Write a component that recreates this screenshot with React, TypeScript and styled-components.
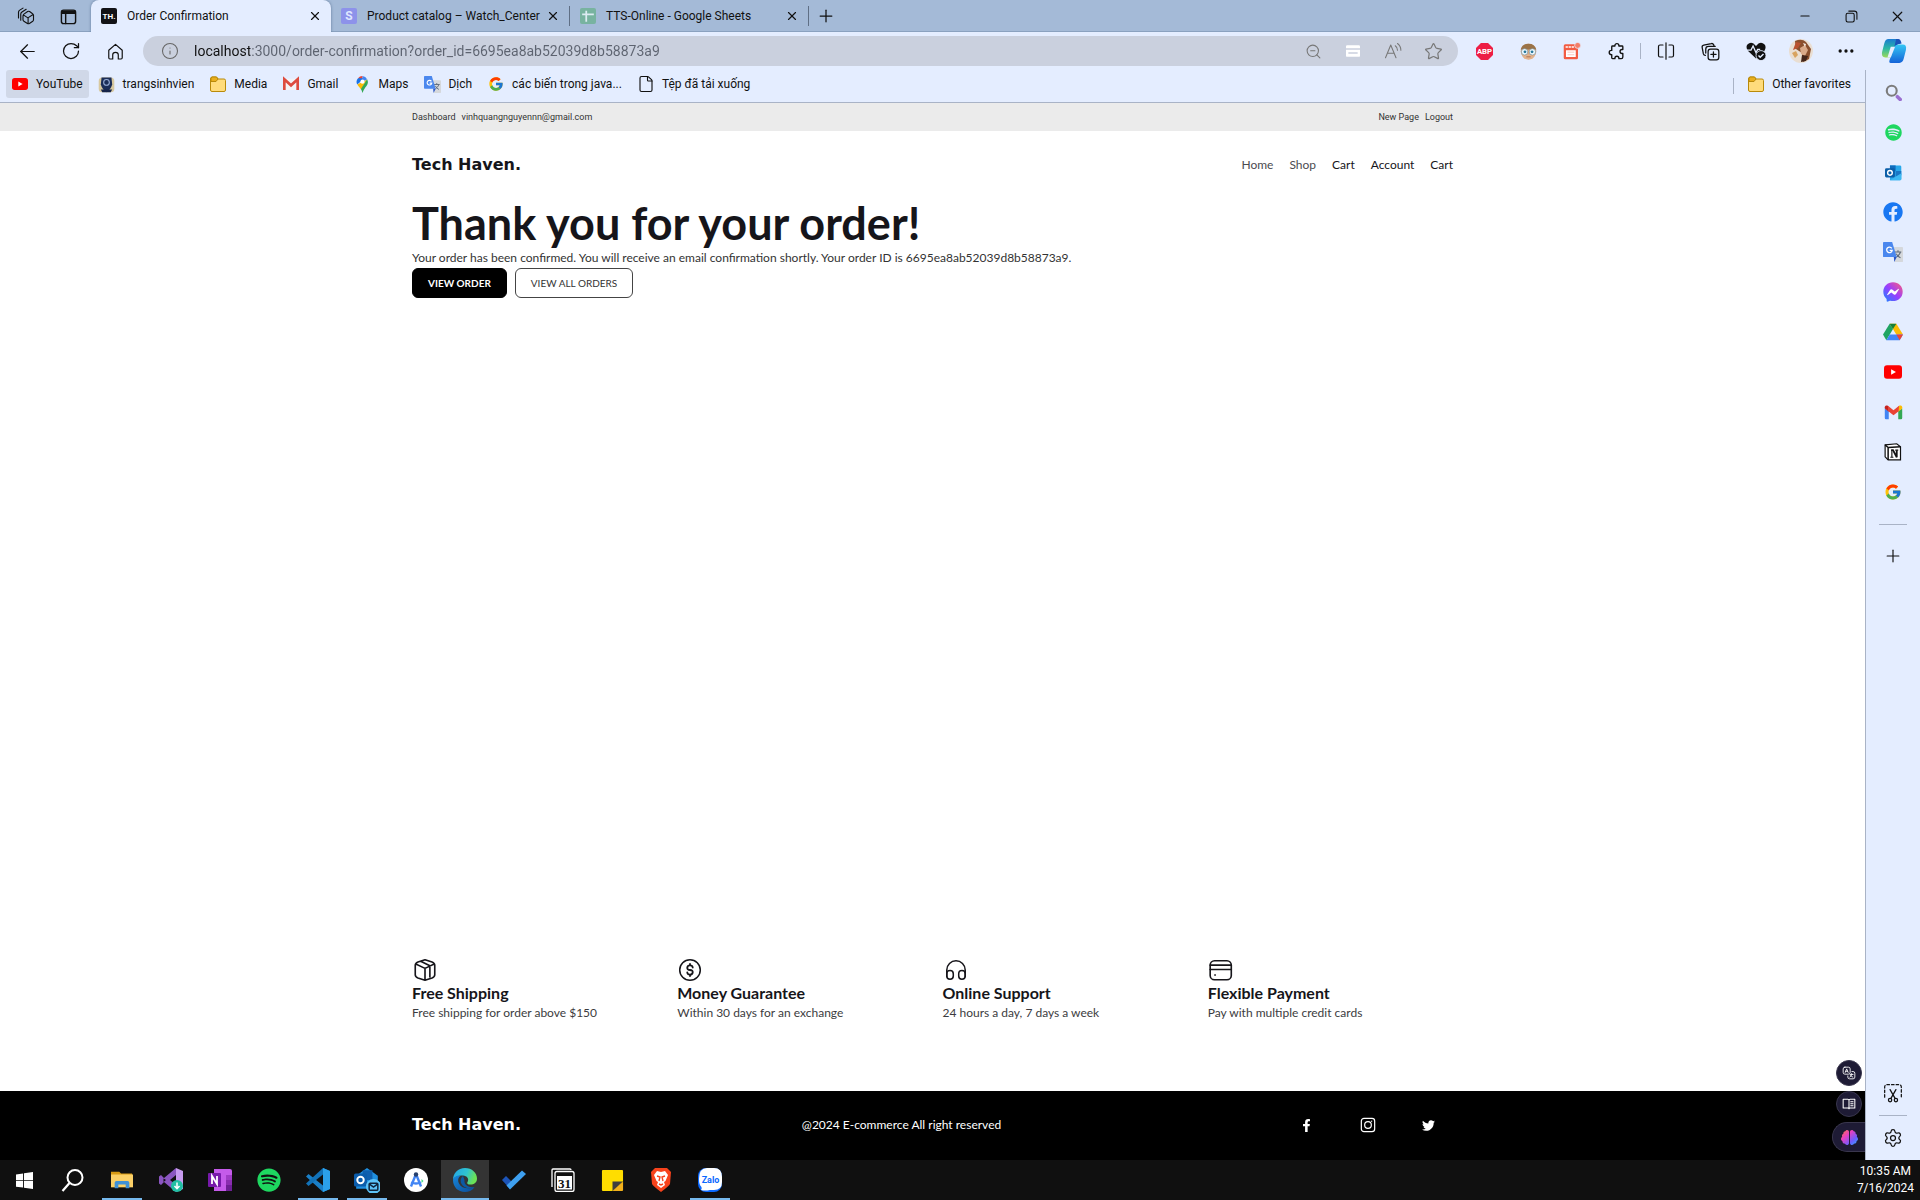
import React from 'react';
import styled, { createGlobalStyle, css } from 'styled-components';
import {
  ArrowLeft, RotateCw, Info, ZoomOut, Star, X, Minus, Plus, Ellipsis, Settings, File,
} from 'lucide-react';
import { FcGoogle } from 'react-icons/fc';
import { FaFacebook, FaFacebookF, FaFacebookMessenger, FaSpotify, FaTwitter, FaBrain } from 'react-icons/fa';

const ui = `Roboto, "Noto Sans", sans-serif`;
const brand = `Lato, "Open Sans", sans-serif`;

const GlobalStyle = createGlobalStyle`
  *, *::before, *::after { box-sizing: border-box; }
  body { margin: 0; background: #fff; font-family: ${ui}; color: #111; }
  button, input { font: inherit; color: inherit; border: 0; background: none; padding: 0; margin: 0; }
  a { color: inherit; text-decoration: none; }
  h1, h3, p { margin: 0; }
  svg { display: block; flex: none; }
`;

/* ---------- browser window ---------- */

const Desktop = styled.div`
  display: flex;
  flex-direction: column;
  min-height: 100vh;
`;

const TabStrip = styled.div`
  display: flex;
  align-items: stretch;
  height: 32px;
  background: #a4bad7;
  box-shadow: inset 0 -1px 0 #8aa1bf;
`;

const StripTools = styled.div`
  display: flex;
  align-items: center;
  width: 91px;
  padding-left: 5px;
`;

const IconButton = styled.button<{ $w?: number; $h?: number; $color?: string }>`
  display: flex;
  align-items: center;
  justify-content: center;
  flex: none;
  width: ${(p) => p.$w ?? 44}px;
  height: ${(p) => p.$h ?? 32}px;
  color: ${(p) => p.$color ?? '#111'};
`;

const Tab = styled.div<{ $active?: boolean }>`
  display: flex;
  align-items: center;
  width: ${(p) => (p.$active ? 240 : 238)}px;
  min-width: 0;
  padding: 0 4px 0 10px;
  font-size: 12px;
  ${(p) =>
    p.$active &&
    css`
      background: #e4edff;
      border-radius: 8px 8px 0 0;
      box-shadow: 0 0 3px #5f7899;
      clip-path: inset(0 -4px 0 -4px);
    `}
`;

const TabTitle = styled.button`
  display: flex;
  align-items: center;
  gap: 10px;
  flex: 1;
  min-width: 0;
  white-space: nowrap;
  text-align: left;
`;

const Separator = styled.span<{ $h?: number; $color?: string; $space?: number }>`
  flex: none;
  align-self: center;
  width: 1px;
  height: ${(p) => p.$h ?? 20}px;
  margin: 0 ${(p) => p.$space ?? 0}px;
  background: ${(p) => p.$color ?? '#5f6f85'};
`;

const Spacer = styled.div`
  flex: 1;
`;

const Favicon = styled.span<{ $bg: string; $color?: string; $size?: number }>`
  display: flex;
  align-items: center;
  justify-content: center;
  flex: none;
  width: 16px;
  height: 16px;
  border-radius: 2px;
  background: ${(p) => p.$bg};
  color: ${(p) => p.$color ?? '#fff'};
  font-size: ${(p) => p.$size ?? 12}px;
  font-weight: 700;
`;

const Toolbar = styled.div`
  display: flex;
  align-items: center;
  height: 38px;
  padding-left: 5px;
  background: #e4edff;
`;

const AddressBar = styled.label`
  display: flex;
  align-items: center;
  flex: 1;
  height: 30px;
  margin: 0 4px 0 6px;
  padding: 0 5px 0 18px;
  border-radius: 15px;
  background: #cad0de;
`;

const Url = styled.input`
  flex: 1;
  min-width: 0;
  padding-left: 15px;
  outline: 0;
  font-size: 14px;
  background: linear-gradient(to right, #111 71px, #5d6370 71px);
  -webkit-background-clip: text;
  background-clip: text;
  -webkit-text-fill-color: transparent;
`;

const Body = styled.div`
  display: flex;
  flex: 1;
`;

const Column = styled.div`
  display: flex;
  flex-direction: column;
  flex: 1;
  min-width: 0;
`;

const Bookmarks = styled.nav`
  display: flex;
  align-items: flex-start;
  gap: 4px;
  height: 33px;
  padding: 0 8px 0 6px;
  background: #e4edff;
  border-bottom: 1px solid #a9b3c6;
`;

const Bookmark = styled.a<{ $hover?: boolean }>`
  display: flex;
  align-items: center;
  gap: 8px;
  height: 28px;
  padding: 0 6px;
  border-radius: 3px;
  background: ${(p) => (p.$hover ? '#d0d8e8' : 'transparent')};
  font-size: 12px;
  white-space: nowrap;
`;

const IconBox = styled.span`
  display: flex;
  justify-content: center;
  width: 16px;
`;

const SideBar = styled.aside`
  display: flex;
  flex-direction: column;
  align-items: center;
  width: 55px;
  padding: 2px 0;
  background: #e4edff;
  border-left: 1px solid #a9b3c6;
`;

const SideRule = styled.hr<{ $after: number }>`
  width: 28px;
  height: 1px;
  margin: 12px 0 ${(p) => p.$after}px;
  border: 0;
  background: #a9b3c6;
`;

/* ---------- shop page ---------- */

const Page = styled.div`
  position: relative;
  display: flex;
  flex-direction: column;
  flex: 1;
  background: #fff;
  color: #16151a;
  font-family: ${brand};
`;

const Container = styled.div`
  width: 100%;
  max-width: 1041px;
  margin: 0 auto;
`;

const Row = styled(Container)`
  display: flex;
  align-items: center;
  justify-content: space-between;
`;

const TopBar = styled.div`
  padding: 8px 0;
  background: #ebebeb;
  color: #333;
  font-family: ${ui};
  font-size: 9px;
  line-height: 12px;
`;

const Links = styled.div<{ $gap: number }>`
  display: flex;
  gap: ${(p) => p.$gap}px;
`;

const Header = styled.header`
  padding: 24px 0;
  font-size: 12px;
  line-height: 20px;
`;

const NavLink = styled.a<{ $muted?: boolean }>`
  color: ${(p) => (p.$muted ? '#4b4b50' : '#16151a')};
`;

const Logo = styled.a`
  font-family: "DejaVu Sans", sans-serif;
  font-size: 16px;
  font-weight: 700;
  line-height: 20px;
`;

const Main = styled.main`
  flex: 1;
`;

const Title = styled.h1`
  font-size: 45px;
  font-weight: 700;
  line-height: 48px;
`;

const Message = styled.p`
  font-size: 12px;
  line-height: 21px;
  color: #333;
`;

const Actions = styled.div`
  display: flex;
  gap: 8px;
`;

const ActionButton = styled.button<{ $primary?: boolean }>`
  height: 30px;
  padding: 0 15px;
  border: 1px solid ${(p) => (p.$primary ? '#000' : '#444')};
  border-radius: 6px;
  background: ${(p) => (p.$primary ? '#000' : '#fff')};
  color: ${(p) => (p.$primary ? '#fff' : '#333')};
  font-size: 10px;
  font-weight: ${(p) => (p.$primary ? 700 : 400)};
`;

const Features = styled(Container)`
  display: grid;
  grid-template-columns: repeat(4, 1fr);
  gap: 20px;
  padding-bottom: 68px;
`;

const FeatureTitle = styled.h3`
  font-size: 16px;
  line-height: 20px;
`;

const FeatureText = styled.p`
  font-size: 12px;
  line-height: 20px;
  color: #3c3c40;
`;

const Footer = styled.footer`
  padding: 24px 0 25px;
  background: #000;
  color: #fff;
  font-size: 12px;
  line-height: 20px;
`;

const Floating = styled.div`
  position: absolute;
  right: 0;
  bottom: 8px;
  display: flex;
  flex-direction: column;
  align-items: flex-end;
  gap: 5px;
`;

const RoundButton = styled.button`
  display: flex;
  align-items: center;
  justify-content: center;
  width: 26px;
  height: 26px;
  margin-right: 3px;
  border: 1px solid #39364d;
  border-radius: 13px;
  background: #1e1b35;
  color: #fff;
`;

const BrainButton = styled(RoundButton)`
  width: 33px;
  height: 30px;
  margin-right: 0;
  border-right: 0;
  border-radius: 15px 0 0 15px;
`;

/* ---------- taskbar ---------- */

const TaskBar = styled.footer`
  display: flex;
  align-items: stretch;
  gap: 1px;
  height: 40px;
  padding-right: 6px;
  background: #101010;
  color: #fff;
`;

const Task = styled.button<{ $open?: boolean; $active?: boolean }>`
  display: flex;
  align-items: center;
  justify-content: center;
  width: 48px;
  background: ${(p) => (p.$active ? '#343434' : 'transparent')};
  ${(p) =>
    (p.$open || p.$active) &&
    css`
      background-image: linear-gradient(#76b9ed, #76b9ed);
      background-repeat: no-repeat;
      background-position: center bottom;
      background-size: ${p.$active ? 48 : 40}px 2px;
    `}
`;

const Clock = styled.time`
  display: flex;
  flex-direction: column;
  justify-content: center;
  align-items: center;
  font-size: 12px;
  line-height: 17px;
`;

/* ---------- drawings ---------- */

type G = { size?: number; vb?: string; children: React.ReactNode };
const Glyph = ({ size = 20, vb = '0 0 24 24', children }: G) => (
  <svg width={size} height={size} viewBox={vb} fill="none" stroke="none" aria-hidden="true">{children}</svg>
);
type L = G & { w?: number };
const Line = ({ size = 20, w = 1.5, vb = '0 0 24 24', children }: L) => (
  <svg width={size} height={size} viewBox={vb} fill="none" stroke="currentColor" strokeWidth={w} strokeLinecap="round" strokeLinejoin="round" aria-hidden="true">{children}</svg>
);

const YouTube = ({ size = 16 }) => (
  <Glyph size={size}><rect x="0" y="3" width="24" height="18" rx="4" fill="#f00" /><path d="M9.500 8.300v7.400l6.400-3.700z" fill="#fff" /></Glyph>
);
const Folder = () => (
  <Glyph size={18} vb="0 0 18 18"><path d="M1.500 4V15q0 1.500 1.500 1.500h12q1.500 0 1.500-1.500V5.500q0-1.500-1.500-1.500H9L7.500 2H3Q1.500 2 1.500 4z" fill="#ffdc7c" stroke="#b98a0a" /><path d="M2 6.500h5L9 4 7.500 2H3L2 3z" fill="#e9ae1d" stroke="#b98a0a" /></Glyph>
);
const Gmail = ({ size = 16 }) => (
  <Glyph size={size}><path d="M1 7v12q0 1.500 1.500 1.500H6V10z" fill="#4285f4" /><path d="M18 10v10.500h3.500Q23 20.500 23 19V7z" fill="#34a853" /><path d="M18 5.500V11l5-4V5.500c0-2.500-2.600-3-4-2z" fill="#fbbc04" /><path d="M1 5.500V7l5 4V5.500L4.800 3.500C3.500 2.500 1 3 1 5.500z" fill="#c5221f" /><path d="M5 3.600L12 9l7-5.400L18.500 10.500 12 15.500l-6.500-5z" fill="#ea4335" /></Glyph>
);
const GmailClassic = () => (
  <Glyph size={16}><path d="M2 4h20v17H2z" fill="#f3f3f6" /><path d="M2 21V5l10 9L22 5v16" stroke="#dd4b3e" strokeWidth="4" /></Glyph>
);
const Maps = () => (
  <Glyph size={17}><path d="M12 0a8 8 0 0 0-6.300 3L12 9z" fill="#ea4335" /><path d="M5.700 3A8 8 0 0 0 4.600 12L15 3z" fill="#1a73e8" /><path d="M4.600 12c1.300 2.500 4 4.500 5.400 7.300L18.500 5z" fill="#fbbc04" /><path d="M12 0v8l6.500-3.500A8 8 0 0 0 12 0z" fill="#4285f4" /><path d="M18.500 4.500L9.800 18.500Q11 21 12 24q1-4 3.500-7.200C18 13.500 21.500 10 18.500 4.500z" fill="#34a853" /><circle cx="12" cy="8" r="3" fill="#fff" /></Glyph>
);
const Translate = ({ size = 17 }) => (
  <Glyph size={size}><path d="M10 6h13q1 0 1 1v16q0 1-1 1H14z" fill="#d5d8dc" /><path d="M14 12h8M18 10v2M21 12c-1 3-3 5-5 6M16 14c1 2 3 4 5 5" stroke="#5f6b7a" strokeWidth="1.300" /><path d="M1 0h10l5.500 18H1q-1 0-1-1V1Q0 0 1 0z" fill="#4a87ee" /><path d="M13 18h3.500L13.500 24z" fill="#2a56c6" /><path d="M10.500 7.600A3.300 3.300 0 1 0 11 10H8" stroke="#fff" strokeWidth="1.600" /></Glyph>
);
const Emblem = () => (
  <Glyph size={17}><rect x="1" y="2" width="22" height="21" rx="5" fill="#d8c9a0" /><path d="M5 2h14l1 10q-2 7-8 11Q6 19 4 12z" fill="#1b2d57" /><circle cx="12" cy="9" r="4" stroke="#9bb0d8" strokeWidth="1.500" /><path d="M4 19h16l-2 4H6z" fill="#16244a" /></Glyph>
);
const Copilot = () => (
  <Glyph size={26}>
    <defs><linearGradient id="cpa" x1="0" y1="0" x2="0" y2="1"><stop stopColor="#1b7bd1" /><stop offset=".5" stopColor="#2bb7a5" /><stop offset="1" stopColor="#9bd95a" /></linearGradient><linearGradient id="cpb" x1="0" y1="0" x2="0" y2="1"><stop stopColor="#35c6f4" /><stop offset="1" stopColor="#1463d8" /></linearGradient></defs>
    <path d="M7 1h8q2 0 1 3l-4 11q-1 3-4 3H4Q0 18 1 13L3 5Q4 1 7 1z" fill="url(#cpa)" /><path d="M14 1h2q2 0 3 4l-4 1-3 10q-2 3-4 2h2z" fill="#1b52b8" /><path d="M17 6h3q4 0 3 5l-2 8q-1 4-4 4H9q-2 0-1-3l4-11q1-3 5-3z" fill="url(#cpb)" /><path d="M13 8L9 18H6l3-10z" fill="#e4edff" />
  </Glyph>
);
const Outlook = ({ size = 22 }) => (
  <Glyph size={size}><path d="M7 2h14q2 0 2 2v17q0 2-2 2H7z" fill="#28a8ea" /><path d="M7 2h8v8H7z" fill="#0f6cbd" /><path d="M15 10h8v6l-8 2z" fill="#1976c4" /><path d="M7 23l16-10v8q0 2-2 2z" fill="#3cb8f2" /><rect x="0" y="6" width="14" height="13" rx="2" fill="#0a5ea8" /><circle cx="7" cy="12.500" r="3.300" stroke="#fff" strokeWidth="2" /></Glyph>
);
const Drive = () => (
  <Glyph size={20}><path d="M8 2h8l8 13h-8z" fill="#fbbc04" /><path d="M8 2L0 15l4 7 8-13.500z" fill="#1fa463" /><path d="M8 2h8l-4 6.500z" fill="#188038" /><path d="M8 15h16l-4 7H4z" fill="#4285f4" /><path d="M16 15h8l-4 7z" fill="#ea4335" /></Glyph>
);
const Notion = () => (
  <Glyph size={18}><path d="M1.500 2.500L17 1l5 4v17.500H5.500l-4-4z" fill="#fff" stroke="#111" strokeWidth="1.600" /><path d="M1.500 2.500L5.500 6v16.500M5.500 6L22 5" stroke="#111" strokeWidth="2" /><path d="M9.500 9.500h2.500l5 9.500V9.500" stroke="#111" strokeWidth="2.400" /><path d="M10.500 9.500V19M8.500 19h4M15 9.500h4" stroke="#111" strokeWidth="1.500" /></Glyph>
);
const Workspaces = () => (
  <Line size={18} w={1.5}><path d="M8 12q0-1.500 1.200-2.500l5-3.500q1.300-.8 2.600 0l4 3Q22 9.800 22 11v6q0 1.300-1 2l-4.500 3q-1.300.8-2.600 0L9.200 19Q8 18.200 8 17zM8.500 10.500l6 4 7-4.500M14.800 14.500V22M5 17.500V9.500q0-1.500 1.200-2.500l6-4M2 14.500V7q0-1.500 1.200-2.500L8 1.500" /></Line>
);
const TabPanel = () => (
  <Line size={17} w={2}><rect x="2" y="3" width="20" height="19" rx="3" /><path d="M3 5h18M3 7h18" strokeWidth="3" /><path d="M8 9v13" /></Line>
);
const House = () => (
  <Line size={19}><path d="M3.500 10.500L12 3l8.500 7.500V20q0 1.500-1.500 1.500h-3.500V16q0-3-3.500-3t-3.500 3v5.500H5Q3.500 21.500 3.500 20z" /></Line>
);
const ReadAloud = () => (
  <Line size={18} w={1.4}><path d="M2 21L9 4l7 17M4.500 15h9M15 5q3 2 3 6M18 2q4.500 3.500 4.500 9" /></Line>
);
const Card = () => (
  <Glyph size={14}><rect x="0" y="2" width="24" height="20" rx="2" fill="#fff" /><path d="M0 8.500h24M4 15.500h16" stroke="#cad0de" strokeWidth="2.500" /></Glyph>
);
const Abp = () => (
  <Glyph size={17}><path d="M7 0h10l7 7v10l-7 7H7l-7-7V7z" fill="#ed1e45" /><text x="12" y="16" fill="#fff" fontSize="11" fontWeight="700" textAnchor="middle" fontFamily="Roboto, sans-serif">ABP</text></Glyph>
);
const Face = () => (
  <Glyph size={17}><ellipse cx="12" cy="12" rx="11" ry="11" fill="#d9a77c" /><path d="M1 9Q3 1 12 1t11 8z" fill="#9a7247" /><path d="M2 16l4 6q6 3 12 0l4-6z" fill="#e3b28b" /><circle cx="6.500" cy="12.500" r="4.500" fill="#f1fbff" stroke="#7b94a0" /><circle cx="17.500" cy="12.500" r="4.500" fill="#f1fbff" stroke="#7b94a0" /><circle cx="7" cy="12.500" r="2" fill="#27789d" /><circle cx="17" cy="12.500" r="2" fill="#27789d" /><path d="M9 19.500h6" stroke="#9b5a3d" /></Glyph>
);
const Pdf = () => (
  <Glyph size={18}><rect x="1" y="3" width="19" height="20" rx="2" fill="#f25c43" /><rect x="4" y="11" width="13" height="9" fill="#fff" /><path d="M6 13.500h9M6 17h9" stroke="#f9b3a6" /><path d="M3.500 6.500h11" stroke="#fff" strokeWidth="2" strokeDasharray="3 1" /><circle cx="19.500" cy="4.500" r="4" fill="#f47e68" stroke="#e4edff" /></Glyph>
);
const Puzzle = () => (
  <Line size={19} w={1.7}><path d="M10 5V4.500a2.500 2.500 0 0 1 5 0V5h4q1 0 1 1v3.500h-1a2.500 2.500 0 0 0 0 5h1V19q0 2-2 2h-3v-.5a2.500 2.500 0 0 0-5 0v.5H7q-1 0-1-1v-4h-.5a2.700 2.700 0 0 1 0-5.400H6V6q0-1 1-1z" /></Line>
);
const Split = () => (
  <Line size={18} w={1.6}><path d="M8 4H4Q2 4 2 6v12q0 2 2 2h4M16 4h4q2 0 2 2v12q0 2-2 2h-4M12 1v22" /></Line>
);
const Collections = () => (
  <Line size={19} w={1.6}><rect x="9" y="9" width="13.500" height="13.500" rx="3" /><path d="M15.700 12.500v6.500M12.500 15.700H19M5.500 17q-2 0-2.500-2L1.500 7q-.5-2.500 2-3L13 2q2-.5 3 1.500l.5 1.500M6 14V9q0-3.500 3.500-3.500H18" /></Line>
);
const Health = () => (
  <Glyph size={20}><path d="M12 21L2.500 12Q-1 7 2 4t7-1l3 3 3-3q4-2 7 1t0 8z" fill="#111" /><path d="M1 11h5l2.500-5L12 14l2-4h3" stroke="#e4edff" strokeWidth="1.600" /><circle cx="18" cy="17.500" r="6" fill="#111" stroke="#e4edff" /><path d="M15 17.500l2 2 4-4" stroke="#e4edff" strokeWidth="1.700" /></Glyph>
);
const Avatar = () => (
  <Glyph size={24}><circle cx="12" cy="12" r="12" fill="#e9ded2" /><path d="M6 2q7-3 11 1l5 7-2 10-6 3-1-9-6-4z" fill="#8a4f2d" /><path d="M11 9l5-3 3 5-3 6-4-2z" fill="#d9a988" /><path d="M7 3l5 1-3 5-5 2z" fill="#b9512f" /><path d="M3 14l4-2 2 4-3 3z" fill="#d8a35f" /><path d="M13 16l6 1-2 5-5 1z" fill="#43251a" /><path d="M14 4l3 1-1 3z" fill="#f5e9df" /></Glyph>
);
const Restore = () => (
  <Line size={13} w={2}><rect x="2" y="6" width="15" height="16" rx="3" /><path d="M7 2h10q5 0 5 5v10" /></Line>
);
const Scissors = () => (
  <Line size={20} w={1.5}><path d="M2 17V5q0-3 3-3h14q3 0 3 3v12" strokeDasharray="3 2.500" /><path d="M8.500 8L14.500 18.500M15.500 8L9.500 18.500" /><circle cx="8.500" cy="20.500" r="2" /><circle cx="15.500" cy="20.500" r="2" /></Line>
);
const Messenger = () => (
  <Glyph size={20}><defs><linearGradient id="ms" x1="0" y1="1" x2="1" y2="0"><stop stopColor="#1289ff" /><stop offset=".5" stopColor="#9a3dff" /><stop offset="1" stopColor="#ff5f77" /></linearGradient></defs><path d="M5 7h14v10H5z" fill="#fff" /><FaFacebookMessenger size={24} fill="url(#ms)" /></Glyph>
);
const TranslateBadge = () => (
  <Line size={14} w={1.5}><rect x="2" y="2" width="12" height="12" rx="3" /><path d="M5.500 11L8 5l2.500 6M6.500 9h3M17 9.500h2q3 0 3 3V19q0 3-3 3h-6q-3 0-3-3v-2M14 14.500h5M16.500 13v1.500q-.5 3-3 4.500M15 16.500q1 2 3.500 2.500" /></Line>
);
const ReaderBadge = () => (
  <Line size={14} w={1.8}><path d="M12 5v14M2 4h8q2 0 2 2 0-2 2-2h8v15h-8q-2 0-2 1 0-1-2-1H2zM15 8h4M15 11.500h4M15 15h4" /></Line>
);

/* shop feature drawings */
const Box = () => (
  <Line size={26} w={1.5}><path d="M12 2.500l6.500 2.200q2.500 1 2.500 3v8.600q0 2-2.500 3L12 21.500l-6.500-2.200Q3 18.300 3 16.300V7.700q0-2 2.500-3zM3.500 6.500L12 10.500l8.500-4M12 10.500v11M8 4l8.500 4v10.500" /></Line>
);
const Dollar = () => (
  <Line size={26} w={1.4}><circle cx="12" cy="12" r="9.500" /><path d="M14.500 9.700q-.2-2-2.500-2T9.500 9.800 12 12t2.500 2.200-2.500 2.100-2.500-2M12 6.500v1M12 16.500v1" strokeWidth="1.700" /></Line>
);
const Headset = () => (
  <Line size={26} w={1.4}><path d="M3.500 18v-6a8.500 8.500 0 0 1 17 0v6" /><rect x="3.500" y="12.500" width="6" height="8" rx="3" /><rect x="14.500" y="12.500" width="6" height="8" rx="3" /></Line>
);
const CreditCard = () => (
  <Line size={26} w={1.5}><rect x="2" y="3.500" width="19.500" height="17.500" rx="4" /><path d="M2 7.500h19.500M2 11.500h19.500M6.500 16.500v.3" /></Line>
);

/* taskbar drawings */
const Windows = () => (
  <Glyph size={17}><path d="M0 3.500l10-1.500v9.500H0zM11.300 1.800L24 0v11.500H11.300zM0 12.800h10V22L0 20.700zM11.300 12.800H24V24l-12.700-1.800z" fill="#fff" /></Glyph>
);
const Magnifier = () => (
  <Glyph size={24}><circle cx="14" cy="9.500" r="7.500" stroke="#fff" strokeWidth="2" /><path d="M8.500 15L1.500 23" stroke="#fff" strokeWidth="2.200" /></Glyph>
);
const Explorer = () => (
  <Glyph size={22}><path d="M0 3h9l2 2h12v4H0z" fill="#d79a14" /><rect y="6" width="24" height="14" fill="#fbd067" /><path d="M4 21v-6q0-2 2-2h12q2 0 2 2v6h-4v-4H8v4z" fill="#3f91d6" /></Glyph>
);
const VisualStudio = () => (
  <Glyph size={24}><path d="M17 0L5 10 2 7 0 8.500v7L2 17l3-3 12 10z" fill="#8a55c0" /><path d="M4.500 10.500L7 12l-2.500 2z" fill="#101010" /><path d="M17 7l-6 5 6 5z" fill="#101010" /><path d="M17 0l7 3v18l-7 3z" fill="#c79bef" /><circle cx="18" cy="18" r="6" fill="#22bfa3" /><path d="M18 14.500v6M15.500 18l2.500 2.700 2.500-2.700" stroke="#fff" strokeWidth="1.500" /></Glyph>
);
const OneNote = () => (
  <Glyph size={24}><path d="M6 1h16q2 0 2 2v18q0 2-2 2H6z" fill="#c55bea" /><path d="M18 7h6v5h-6z" fill="#a03cc6" /><path d="M18 12h6v5h-6z" fill="#8a2db0" /><path d="M18 17h6v6h-6z" fill="#6c1f94" /><rect y="5" width="13" height="14" rx="1" fill="#7719aa" /><path d="M4 16V8l5 8V8" stroke="#fff" strokeWidth="1.800" /></Glyph>
);
const VsCode = () => (
  <Glyph size={24}><path d="M17 0l7 3v18l-7 3L0 8.500 2.500 6 17 17.500z" fill="#1a7fc7" /><path d="M17 0v6.500L2.500 18 0 15.500z" fill="#1272b8" /><path d="M17 0l7 3v18l-7 3z" fill="#2ba0ea" /></Glyph>
);
const MailTask = () => (
  <Glyph size={26}><path d="M2 8l10-7 10 7v12H2z" fill="#1f8fe0" /><path d="M8 3h9v9H8z" fill="#0f5fae" /><rect x="0" y="6" width="12" height="12" rx="1.500" fill="#0b5cab" /><circle cx="6" cy="12" r="3" stroke="#fff" strokeWidth="1.800" /><circle cx="18" cy="18" r="7" fill="#5ec3f8" /><rect x="14" y="15" width="8" height="6.500" rx="1" stroke="#10243c" strokeWidth="1.400" /><path d="M14 15.500l4 3 4-3" stroke="#10243c" strokeWidth="1.400" /></Glyph>
);
const Studio = () => (
  <Glyph size={24}><circle cx="12" cy="12" r="12" fill="#fff" /><path d="M12 6L7 18.500M12 6l5 12.500M7 14.500q5 2 10 0" stroke="#4285f4" strokeWidth="2.400" /><circle cx="12" cy="6.500" r="2.200" fill="#27416e" /><path d="M17.500 11l2 2-2 2z" fill="#3ddc84" /></Glyph>
);
const Edge = () => (
  <Glyph size={24}>
    <defs><linearGradient id="ed" x1="0" y1="0" x2="1" y2=".3"><stop stopColor="#22a3e6" /><stop offset=".6" stopColor="#2fc4d0" /><stop offset="1" stopColor="#6be255" /></linearGradient><linearGradient id="ee" x1="0" y1="0" x2="1" y2="1"><stop stopColor="#1787dc" /><stop offset="1" stopColor="#0b4b96" /></linearGradient></defs>
    <path d="M0 12C0 5 5 0 12 0s12 5 12 10.500c0 4-3 6-6.500 6-3 0-4-1.300-3-2.600 2-2.600-.5-6.400-4.500-6.400C5 7.500 1 9 0 12z" fill="url(#ed)" /><path d="M0 12c.5-3 4-5 8-4.500-3 1.500-3.500 5-2 8 2.500 5 9 6 15.500 3.700C19 22.500 15.500 24 12 24 5 24 0 19 0 12z" fill="url(#ee)" /><path d="M10 8c-4 3-3 10 4 12 3 .7 6 0 7.500-.8-4 .3-11-1.200-10-7.200z" fill="#0c59a4" />
  </Glyph>
);
const Todo = () => (
  <Glyph size={24}><path d="M0 12l4-4 7 7-3 6z" fill="#1c54b8" /><path d="M8 21.500l-3.500-4L20 2.500l4 3.500z" fill="#3ea0f0" /></Glyph>
);
const Calendar = () => (
  <Glyph size={24}><path d="M1 19V2q0-1 1-1h17q1 0 1 1" stroke="#fff" strokeWidth="1.300" /><rect x="4" y="3.500" width="19" height="20" rx="2" fill="#111" stroke="#fff" strokeWidth="1.300" /><rect x="6" y="8" width="15" height="13.500" fill="#fff" /><text x="13.500" y="19.500" fill="#111" fontSize="13" fontWeight="700" textAnchor="middle" fontFamily="Liberation Serif, serif">31</text></Glyph>
);
const Sticky = () => (
  <Glyph size={23}><path d="M2 1h20q1 0 1 1v11L12 23H2q-1 0-1-1V2q0-1 1-1z" fill="#fd0" /><path d="M12 23V13h11z" fill="#3e3e3e" /><path d="M12 23L23 13v9q0 1-1 1z" fill="#f2b11c" /></Glyph>
);
const Brave = () => (
  <Glyph size={24}><path d="M6 0h12l4 4-1 12q-1 2-9 8-8-6-9-8L2 4z" fill="#f7431c" /><path d="M12 4l4-1 3 4-2.500 6-1.500 1 1 3-4 3-4-3 1-3-1.500-1L5 7l3-4z" fill="#fff" /><path d="M8 8l3 1-1 4M16 8l-3 1 1 4M10 16l2 1 2-1" stroke="#f7431c" strokeWidth="1.400" /></Glyph>
);
const Zalo = () => (
  <Glyph size={24}><rect width="24" height="24" rx="8" fill="#0a68ff" /><path d="M9 0h7q8 0 8 9v5q0 8-8 8h-4q-5 1-9 0 1-1 .5-3Q1 17 1 11 1 0 9 0z" fill="#fff" /><text x="12.500" y="14.500" fill="#0a68ff" fontSize="9" fontWeight="700" textAnchor="middle" fontFamily="Roboto, sans-serif">Zalo</text></Glyph>
);

/* ---------- content ---------- */

const bookmarks: [string, React.ReactNode][] = [
  ['YouTube', <YouTube />], ['trangsinhvien', <Emblem />], ['Media', <Folder />], ['Gmail', <GmailClassic />],
  ['Maps', <Maps />], ['Dịch', <Translate />], ['các biến trong java...', <FcGoogle size={16} />],
  ['Tệp đã tải xuống', <File size={18} strokeWidth={1.5} />],
];

const sideApps: [string, React.ReactNode][] = [
  ['Search', <Line size={17} w={3}><circle cx="9.500" cy="9.500" r="7" stroke="#7c7c7c" /><path d="M17.500 18l4 4" stroke="#9a6fd0" strokeWidth="5" /></Line>],
  ['Spotify', <FaSpotify size={17} color="#1ed760" />],
  ['Outlook', <Outlook size={17} />],
  ['Facebook', <FaFacebook size={20} color="#1877f2" />],
  ['Translate', <Translate size={20} />],
  ['Messenger', <Messenger />],
  ['Drive', <Drive />],
  ['YouTube', <YouTube size={18} />],
  ['Gmail', <Gmail size={19} />],
  ['Notion', <Notion />],
  ['Google', <FcGoogle size={18} />],
];

const extensions: [string, React.ReactNode][] = [
  ['Ad blocker', <Abp />], ['Profile helper', <Face />], ['PDF tools', <Pdf />], ['Extensions', <Puzzle />],
];

const browserTools: [string, React.ReactNode][] = [
  ['Split screen', <Split />], ['Collections', <Collections />], ['Browser essentials', <Health />],
  ['Profile', <Avatar />], ['More', <Ellipsis size={20} strokeWidth={2} />],
];

const features = [
  { icon: <Box />, title: 'Free Shipping', text: 'Free shipping for order above $150' },
  { icon: <Dollar />, title: 'Money Guarantee', text: 'Within 30 days for an exchange' },
  { icon: <Headset />, title: 'Online Support', text: '24 hours a day, 7 days a week' },
  { icon: <CreditCard />, title: 'Flexible Payment', text: 'Pay with multiple credit cards' },
];

const tasks: { name: string; icon: React.ReactNode; open?: boolean; active?: boolean }[] = [
  { name: 'Start', icon: <Windows /> },
  { name: 'Search', icon: <Magnifier /> },
  { name: 'File Explorer', icon: <Explorer />, open: true },
  { name: 'Visual Studio', icon: <VisualStudio /> },
  { name: 'OneNote', icon: <OneNote /> },
  { name: 'Spotify', icon: <FaSpotify size={24} color="#1ed760" /> },
  { name: 'VS Code', icon: <VsCode />, open: true },
  { name: 'Outlook', icon: <MailTask />, open: true },
  { name: 'Android Studio', icon: <Studio /> },
  { name: 'Edge', icon: <Edge />, active: true },
  { name: 'To Do', icon: <Todo /> },
  { name: 'Calendar', icon: <Calendar /> },
  { name: 'Sticky Notes', icon: <Sticky /> },
  { name: 'Brave', icon: <Brave /> },
  { name: 'Zalo', icon: <Zalo />, open: true },
];

function BrowserTab({ title, icon, active }: { title: string; icon: React.ReactNode; active?: boolean }) {
  return (
    <Tab $active={active}>
      <TabTitle>{icon}<span>{title}</span></TabTitle>
      <IconButton $w={24} $h={24} aria-label="Close tab"><X size={14} strokeWidth={2} /></IconButton>
    </Tab>
  );
}

export default function App() {
  return (
    <Desktop>
      <GlobalStyle />
      <TabStrip>
        <StripTools>
          <IconButton $w={42} aria-label="Workspaces"><Workspaces /></IconButton>
          <IconButton $w={42} aria-label="Tab actions"><TabPanel /></IconButton>
        </StripTools>
        <BrowserTab active title="Order Confirmation" icon={<Favicon $bg="#121216" $size={8}>TH.</Favicon>} />
        <BrowserTab title="Product catalog – Watch_Center" icon={<Favicon $bg="#8d92ea" $color="#dfe6ff">S</Favicon>} />
        <Separator />
        <BrowserTab
          title="TTS-Online - Google Sheets"
          icon={<Favicon $bg="#78b3a0"><Glyph size={14}><path d="M2 9h20M9 3v19" stroke="#dcebf2" strokeWidth="3" /></Glyph></Favicon>}
        />
        <Separator />
        <IconButton $w={34} aria-label="New tab"><Plus size={20} strokeWidth={1.5} /></IconButton>
        <Spacer />
        <IconButton $w={46} aria-label="Minimize"><Minus size={14} strokeWidth={2} /></IconButton>
        <IconButton $w={46} aria-label="Restore"><Restore /></IconButton>
        <IconButton $w={46} aria-label="Close"><X size={17} strokeWidth={1.7} /></IconButton>
      </TabStrip>

      <Toolbar>
        <IconButton aria-label="Back"><ArrowLeft size={23} strokeWidth={1.3} /></IconButton>
        <IconButton aria-label="Refresh"><RotateCw size={20} strokeWidth={1.5} /></IconButton>
        <IconButton aria-label="Home"><House /></IconButton>
        <AddressBar>
          <Info size={18} strokeWidth={1.4} color="#666" />
          <Url aria-label="Address" defaultValue="localhost:3000/order-confirmation?order_id=6695ea8ab52039d8b58873a9" />
          <IconButton $w={40} $h={28} $color="#777" aria-label="Zoom"><ZoomOut size={17} strokeWidth={1.5} /></IconButton>
          <IconButton $w={40} $h={28} aria-label="Payment"><Card /></IconButton>
          <IconButton $w={40} $h={28} $color="#777" aria-label="Read aloud"><ReadAloud /></IconButton>
          <IconButton $w={40} $h={28} $color="#777" aria-label="Favorite"><Star size={19} strokeWidth={1.5} /></IconButton>
        </AddressBar>
        {extensions.map(([name, icon]) => <IconButton key={name} aria-label={name}>{icon}</IconButton>)}
        <Separator $color="#a9b3c6" $space={2} $h={16} />
        {browserTools.map(([name, icon]) => <IconButton key={name} $w={45} aria-label={name}>{icon}</IconButton>)}
        <IconButton $w={52} aria-label="Copilot"><Copilot /></IconButton>
      </Toolbar>

      <Body>
        <Column>
          <Bookmarks aria-label="Favorites">
            {bookmarks.map(([name, icon], i) => (
              <Bookmark key={name} href="#" $hover={i === 0}><IconBox>{icon}</IconBox>{name}</Bookmark>
            ))}
            <Spacer />
            <Separator $h={16} $color="#a9b3c6" $space={4} />
            <Bookmark href="#"><IconBox><Folder /></IconBox>Other favorites</Bookmark>
          </Bookmarks>

          <Page>
            <TopBar>
              <Row>
                <Links $gap={6}><a href="#">Dashboard</a><a href="#">vinhquangnguyennn@gmail.com</a></Links>
                <Links $gap={6}><a href="#">New Page</a><a href="#">Logout</a></Links>
              </Row>
            </TopBar>
            <Header>
              <Row>
                <Logo href="#">Tech Haven.</Logo>
                <Links as="nav" $gap={16}>
                  <NavLink href="#" $muted>Home</NavLink>
                  <NavLink href="#" $muted>Shop</NavLink>
                  <NavLink href="#">Cart</NavLink>
                  <NavLink href="#">Account</NavLink>
                  <NavLink href="#">Cart</NavLink>
                </Links>
              </Row>
            </Header>
            <Main>
              <Container>
                <Title>Thank you for your order!</Title>
                <Message>
                  Your order has been confirmed. You will receive an email confirmation shortly. Your order ID is 6695ea8ab52039d8b58873a9.
                </Message>
                <Actions>
                  <ActionButton $primary>VIEW ORDER</ActionButton>
                  <ActionButton>VIEW ALL ORDERS</ActionButton>
                </Actions>
              </Container>
            </Main>
            <Features>
              {features.map((f) => (
                <div key={f.title}>
                  {f.icon}
                  <FeatureTitle>{f.title}</FeatureTitle>
                  <FeatureText>{f.text}</FeatureText>
                </div>
              ))}
            </Features>
            <Footer>
              <Row>
                <Logo href="#">Tech Haven.</Logo>
                <p>@2024 E-commerce All right reserved</p>
                <Links $gap={12}>
                  <IconButton $w={49} $h={20} $color="#fff" aria-label="Facebook"><FaFacebookF size={13} /></IconButton>
                  <IconButton $w={49} $h={20} $color="#fff" aria-label="Instagram">
                    <Line size={16} w={1.8}><rect x="2" y="2" width="20" height="20" rx="4" /><circle cx="12" cy="12" r="5" /><path d="M17.500 6.300v.2" /></Line>
                  </IconButton>
                  <IconButton $w={49} $h={20} $color="#fff" aria-label="Twitter"><FaTwitter size={13} /></IconButton>
                </Links>
              </Row>
            </Footer>
            <Floating>
              <RoundButton aria-label="Translate page"><TranslateBadge /></RoundButton>
              <RoundButton aria-label="Reader"><ReaderBadge /></RoundButton>
              <BrainButton aria-label="Assistant">
                <Glyph size={17}><defs><linearGradient id="br" x1="0" y1="0" x2="1" y2="1"><stop stopColor="#ff7a3d" /><stop offset=".35" stopColor="#e83fc0" /><stop offset=".7" stopColor="#6b5cff" /><stop offset="1" stopColor="#2fb4ff" /></linearGradient></defs><FaBrain size={24} fill="url(#br)" /></Glyph>
              </BrainButton>
            </Floating>
          </Page>
        </Column>

        <SideBar>
          {sideApps.map(([name, icon]) => <IconButton key={name} $h={40} aria-label={name}>{icon}</IconButton>)}
          <SideRule $after={11} />
          <IconButton $h={40} aria-label="Customize"><Plus size={20} strokeWidth={1.4} /></IconButton>
          <Spacer />
          <IconButton $h={20} aria-label="Screenshot"><Scissors /></IconButton>
          <SideRule $after={2} />
          <IconButton $h={40} aria-label="Settings"><Settings size={20} strokeWidth={1.5} /></IconButton>
        </SideBar>
      </Body>

      <TaskBar>
        {tasks.map((t) => <Task key={t.name} aria-label={t.name} $open={t.open} $active={t.active}>{t.icon}</Task>)}
        <Spacer />
        <Clock><span>10:35 AM</span><span>7/16/2024</span></Clock>
      </TaskBar>
    </Desktop>
  );
}
